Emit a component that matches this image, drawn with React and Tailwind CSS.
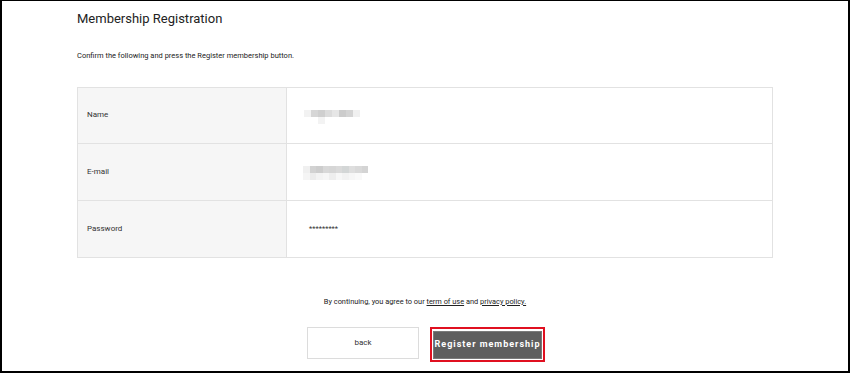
const nameBlur = [
  ["#f2f2f2", "#d6d6d6", "#cfcfcf", "#dcdcdc", "#e6e6e6", "#cccccc", "#d4d4d4", "#f0f0f0"],
  ["#ffffff", "#ffffff", "#f3f3f3", "#ffffff", "#ffffff", "#ffffff", "#ffffff", "#ffffff"],
];

const mailBlur = [
  ["#f0f0f0", "#d2d2d2", "#cdcdcd", "#d8d8d8", "#d6d6d6", "#dadada", "#d3d6d6", "#dedede", "#d9d9d9", "#d4d4d4"],
  ["#f5f5f5", "#ececec", "#f3f3f3", "#f6f6f6", "#eeeeee", "#f7f7f7", "#f2f2f2", "#f6f6f6", "#f9f9f9", "#ffffff"],
];

function Mosaic({ rows, cell }) {
  return (
    <div className="flex flex-col">
      {rows.map((row, i) => (
        <div key={i} className="flex">
          {row.map((c, j) => (
            <div key={j} className={cell} style={{ background: c }} />
          ))}
        </div>
      ))}
    </div>
  );
}

export default function App() {
  return (
    <div
      className="w-[850px] h-[373px] bg-white border-black border-t border-l-2 border-r-2 border-b-2 overflow-hidden"
      style={{ fontFamily: "Roboto, 'Liberation Sans', sans-serif" }}
    >
      <div className="px-[75px] pt-[10px]">
        {/* Heading */}
        <h1 className="text-[13px] leading-[16px] text-[#222]">Membership Registration</h1>
        <p className="mt-[24px] text-[7.5px] leading-[10px] text-[#222]">
          Confirm the following and press the Register membership button.
        </p>

        {/* Table */}
        <div className="mt-[26px] border border-[#e2e2e2]">
          <div className="flex h-[56px] border-b border-[#e2e2e2]">
            <div className="w-[209px] shrink-0 bg-[#f6f6f6] border-r border-[#e2e2e2] flex items-center pl-[9px] pb-[1px] text-[8px] text-[#333]">
              Name
            </div>
            <div className="flex items-center pl-[17px] pt-[2px]">
              <Mosaic rows={nameBlur} cell="w-[7px] h-[7px]" />
            </div>
          </div>
          <div className="flex h-[57px] border-b border-[#e2e2e2]">
            <div className="w-[209px] shrink-0 bg-[#f6f6f6] border-r border-[#e2e2e2] flex items-center pl-[9px] text-[8px] text-[#333]">
              E-mail
            </div>
            <div className="flex items-center pl-[16px] pt-[2px]">
              <Mosaic rows={mailBlur} cell="w-[6.5px] h-[7px]" />
            </div>
          </div>
          <div className="flex h-[56px]">
            <div className="w-[209px] shrink-0 bg-[#f6f6f6] border-r border-[#e2e2e2] flex items-center pl-[9px] text-[8px] text-[#333]">
              Password
            </div>
            <div className="flex items-center pl-[22px] text-[7.5px] text-[#333]">
              *********
            </div>
          </div>
        </div>

        {/* Agreement */}
        <p className="mt-[38px] text-center text-[7.4px] leading-[12px] text-[#222]">
          By continuing, you agree to our <a className="underline">term of use</a> and{" "}
          <a className="underline">privacy policy.</a>
        </p>

        {/* Buttons */}
        <div className="mt-[19px] flex justify-center gap-[11px] pl-[2px]">
          <button className="w-[112px] h-[32px] border border-[#dcdcdc] bg-white text-[8px] text-[#333]">
            back
          </button>
          <div className="border-2 border-[#e01020] p-px">
            <button className="w-[109px] h-[28px] bg-[#5e5e5e] border border-[#7a7a7a] text-white text-[9px] font-bold tracking-[1px]">
              Register membership
            </button>
          </div>
        </div>
      </div>
    </div>
  );
}
